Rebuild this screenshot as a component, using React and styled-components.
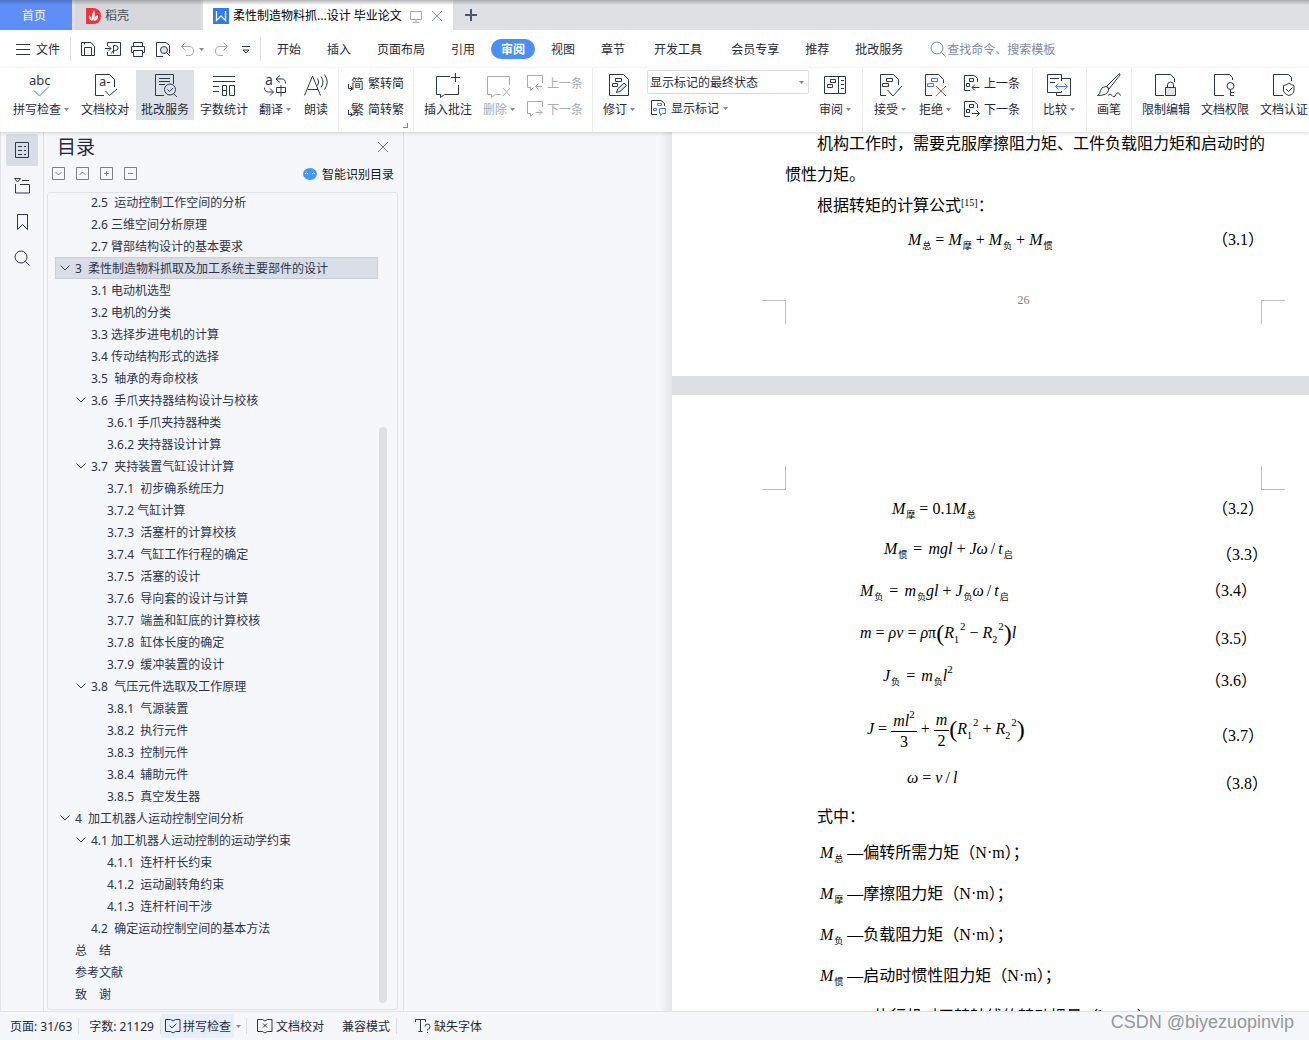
import React from 'react'
import styled, { createGlobalStyle } from 'styled-components'

const outline = [
  { level: 2, text: '2.5  运动控制工作空间的分析' },
  { level: 2, text: '2.6 三维空间分析原理' },
  { level: 2, text: '2.7 臂部结构设计的基本要求' },
  { level: 1, text: '3  柔性制造物料抓取及加工系统主要部件的设计', open: true, active: true },
  { level: 2, text: '3.1 电动机选型' },
  { level: 2, text: '3.2 电机的分类' },
  { level: 2, text: '3.3 选择步进电机的计算' },
  { level: 2, text: '3.4 传动结构形式的选择' },
  { level: 2, text: '3.5  轴承的寿命校核' },
  { level: 2, text: '3.6  手爪夹持器结构设计与校核', open: true },
  { level: 3, text: '3.6.1 手爪夹持器种类' },
  { level: 3, text: '3.6.2 夹持器设计计算' },
  { level: 2, text: '3.7  夹持装置气缸设计计算', open: true },
  { level: 3, text: '3.7.1  初步确系统压力' },
  { level: 3, text: '3.7.2 气缸计算' },
  { level: 3, text: '3.7.3  活塞杆的计算校核' },
  { level: 3, text: '3.7.4  气缸工作行程的确定' },
  { level: 3, text: '3.7.5  活塞的设计' },
  { level: 3, text: '3.7.6  导向套的设计与计算' },
  { level: 3, text: '3.7.7  端盖和缸底的计算校核' },
  { level: 3, text: '3.7.8  缸体长度的确定' },
  { level: 3, text: '3.7.9  缓冲装置的设计' },
  { level: 2, text: '3.8  气压元件选取及工作原理', open: true },
  { level: 3, text: '3.8.1  气源装置' },
  { level: 3, text: '3.8.2  执行元件' },
  { level: 3, text: '3.8.3  控制元件' },
  { level: 3, text: '3.8.4  辅助元件' },
  { level: 3, text: '3.8.5  真空发生器' },
  { level: 1, text: '4  加工机器人运动控制空间分析', open: true },
  { level: 2, text: '4.1 加工机器人运动控制的运动学约束', open: true },
  { level: 3, text: '4.1.1  连杆杆长约束' },
  { level: 3, text: '4.1.2  运动副转角约束' },
  { level: 3, text: '4.1.3  连杆杆间干涉' },
  { level: 2, text: '4.2  确定运动控制空间的基本方法' },
  { level: 1, text: '总　结' },
  { level: 1, text: '参考文献' },
  { level: 1, text: '致　谢' },
]

const menu = [
  { text: '开始' },
  { text: '插入' },
  { text: '页面布局' },
  { text: '引用' },
  { text: '审阅', active: true },
  { text: '视图' },
  { text: '章节' },
  { text: '开发工具', wide: true },
  { text: '会员专享' },
  { text: '推荐' },
  { text: '批改服务' },
]

const blue = '#3f83f0'
const arrowDown = <path d="M0 0h5L2.5 3z" fill="#7d869b" stroke="none" />

const marks = <path d="M8.500 5.500h6v3h-6zM4.500 10.500h6v3h-6z" />

// 24px ribbon drawings
const big = {
  spell: (
    <>
      <text x="0" y="12" fontSize="13" fill="#2d3850" stroke="none">abc</text>
      <path d="M5 17.500l5.500 5.500 9-9" stroke={blue} />
    </>
  ),
  proof: (
    <>
      <path d="M11 22.500H2.500V1.500h14L21.500 6.500V14M12.500 18l4 4.500 7.500-6.500" />
      <text x="6" y="13" fontSize="13" fill="#2d3850" stroke="none">a-</text>
    </>
  ),
  service: (
    <>
      <path d="M11 22.500H2.500V1.500h18V11M6 5.500h11M6 8.500h11M6 11.500h6" />
      <circle cx="17" cy="16.500" r="5.500" />
      <path d="M14.500 16.500l2 2 3.500-3.500M20.500 20.500l3.500 3.500" />
    </>
  ),
  count: (
    <path d="M1 3.500h22M1 8.500h22M1 13.500h6M1 18.500h6M10.500 12.500h4v10h-4zM10.500 17.500h4M17.500 12.500h5v10h-5z" />
  ),
  translate: (
    <>
      <text x="2" y="12" fontSize="14" fill="#2d3850" stroke="none">a</text>
      <path d="M17 2.500l-4 3.500 4 3.500M13 6h6q3.500 0 3.500 4.500M1.500 14.500q0 4.500 4 4.500H10M7 15.500l3.500 3.500L7 22.500M13.500 14.500h9v5h-9zM18 12v11.500" />
    </>
  ),
  read: (
    <path d="M.5 22.500L8.500 3l8 19.500M3.500 16.500h10.500M13.500 5.500q2.500 3.500 0 7M17 3.500q4 5.500 0 11M20.500 1.500q5.500 7.500 0 15" />
  ),
  addNote: (
    <path d="M14 3.500H.5v18H4.500v3l4-3h14V12M19.500 0v9M15 4.500h9" />
  ),
  delNote: (
    <path d="M22.500 12V3.500H.5v18H4.500v3l4-3h5M16 15l7 8M23 15l-7 8" />
  ),
  revise: (
    <>
      <path d="M2.500 1.500h14l5 5v16h-19z" />
      <path d="M8.500 5.500h6v3h-6zM5.500 10.500h5v3h-5z" />
      <path d="M9.500 19.500l1-3.500 6.500-6 2.500 2.500-6.500 6z" fill="#dfe1e6" />
    </>
  ),
  review: (
    <path d="M1.500 3.500h21v17h-21zM15.500 3.500v17M7.500 6.500h5v3h-5zM4.500 11.500h5v3h-5zM18 7.500h3M18 11.500h3M18 15.500h3" />
  ),
  accept: (
    <>
      <path d="M8 22.500H2.500V1.500h13l5 5V12M9.500 17l5.500 6 9-10" />
      {marks}
    </>
  ),
  reject: (
    <>
      <path d="M9 22.500H2.500V1.500h13l5 5V10" />
      <g stroke={blue}>{marks}</g>
      <path d="M13 13l10 10M23 13L13 23" stroke="#e2524c" />
    </>
  ),
  compare: (
    <>
      <path d="M14.500 8V1.500H.5v18h9M3 5.500h9M3 9.500h5M14.500 5.500h9v17h-14v-3M14.500 18v1.500h-5" />
      <path d="M8.500 13.500h12M11.500 10.500l-3 3 3 3M17.500 10.500l3 3-3 3" stroke={blue} />
    </>
  ),
  pen: (
    <>
      <path d="M22.500.5L9.500 13.500l2.500 2.500L23 2z" />
      <path d="M9 13.500q3 0 2.500 4-1 5-11 5 2.500-1 3-5 1-4 5.500-4zM11 22.500q2-3 4 0t4-1 4.500 1" />
    </>
  ),
  limit: (
    <>
      <path d="M10 22.500H1.500v-21h15l4 4V9" />
      <path d="M11.500 14.500h10v8h-10z" fill="#e2e4e8" />
      <path d="M13.500 14.500v-2.500q0-3 3-3t3 3v2.500" />
    </>
  ),
  access: (
    <>
      <path d="M11 22.500H1.500v-21h15l3 3V7" />
      <circle cx="17.500" cy="13" r="3.500" />
      <path d="M17.500 16.500v6h3.500M17.500 19.500h3.500" />
    </>
  ),
  certify: (
    <path d="M11 22.500H1.500v-21h15l3 3V8M11.500 12.500q3.500-.500 5.500-2.500 2 2 5 2.500v4.500q0 4-5 5.500-5.500-1.500-5.500-5.500zM14 16l2.500 2.500 4-4" />
  ),
}

// 16px drawings
const small = {
  menu: <path d="M1 3.500h14M1 8.500h14M1 13.500h14" />,
  save: <path d="M1.500 1.500h9.500l3.500 4v9h-13zM4.500 14.500v-8h7v8M4.500 1.500v2" />,
  pdf: (
    <path d="M2.500 5V1.500h13v13h-13V11M0 7.500h6M3.500 5l2.500 2.500L3.500 10M8.500 12.500V4.500h2q2.500 0 2.500 2.500t-2.500 2.500q-4 0-4 3" />
  ),
  print: <path d="M3.500 5.500v-4h9v4M3.500 11.500h-2v-6h13v6h-2M3.500 9.500h9v6h-9z" />,
  preview: (
    <>
      <path d="M8 15.500H1.500V1.500h9.500l3.500 3v8" />
      <circle cx="9" cy="9" r="3.500" fill="#dfe1e6" />
      <path d="M12 12l3 3" />
    </>
  ),
  undo: <path d="M5.500 1.500l-4 4 4 4M1.500 5.500H9q4.500 0 4.500 4.500T9 14.500H6" />,
  redo: <path d="M10.500 1.500l4 4-4 4M14.500 5.500H7Q2.500 5.500 2.500 10t4.500 4.500h3" />,
  more: <path d="M4 5.500h8M5 9l3 3 3-3z" />,
  search: (
    <>
      <circle cx="7" cy="7" r="6" />
      <path d="M11.500 11.500l4 4" />
    </>
  ),
  plus: <path d="M8 2v12M2 8h12" strokeWidth="2" />,
  close: <path d="M3 3l10 10M13 3L3 13" />,
  screen: <path d="M2.500 3.500h11v8h-11zM8 11.500v3M5 14.500h6" />,
  toSimple: (
    <>
      <text x="3" y="13" fontSize="13" fill="#2d3850" stroke="none">简</text>
      <path d="M.5 9v4.500H4M2.500 11.500l2 2-2 2" />
    </>
  ),
  toTrad: (
    <>
      <text x="3" y="13" fontSize="13" fill="#2d3850" stroke="none">繁</text>
      <path d="M.5 9v4.500H4M2.500 11.500l2 2-2 2" />
    </>
  ),
  prevNote: <path d="M15.500 8V.5H.5v12h3v3l3-3M15 11.500H9M11.500 8.500l-3 3 3 3" />,
  nextNote: <path d="M15.500 6V.5H.5v12h3v3l3-3M8.500 11.500H15M12 8.500l3 3-3 3" />,
  prevMark: <path d="M6 15.500H.5V.5h9.500l3.500 3V7M5.500 3.500h4v3h-4zM2.500 8.500h3v3h-3zM15.500 12.500H8M11 9.500l-3 3 3 3" />,
  nextMark: <path d="M6 15.500H.5V.5h9.500l3.500 3V7M5.500 3.500h4v3h-4zM2.500 8.500h3v3h-3zM8 12.500h7.500M12.500 9.500l3 3-3 3" />,
  showMark: (
    <>
      <path d="M6 14.500H.5V.5h9.500l3.500 3V6" />
      <path d="M6.500 3.500h4v2h-4zM2.500 8.500h3v2h-3zM8.500 8.500h6v5h-3l-2 2v-2h-1z" stroke={blue} />
    </>
  ),
  outline: <path d="M1.500.5h13v15h-13zM4 4.500h4M10 4.500h2M4 8.500h4M10 8.500h2M4 12.500h4M10 12.500h2" />,
  chapters: <path d="M.5.5h6L3.500 4zM8 2.500h7M1.500 6v9h14V6.500H6" />,
  bookmark: <path d="M3.500.5h10v15l-5-5-5 5z" />,
  boxDown: <path d="M2.500 1.500h12v12h-12zM5.500 6l3 3 3-3" />,
  boxUp: <path d="M2.500 1.500h12v12h-12zM5.500 9l3-3 3 3" />,
  boxPlus: <path d="M2.500 1.500h12v12h-12zM8.500 5v5M6 7.500h5" />,
  boxMinus: <path d="M2.500 1.500h12v12h-12zM6 7.500h5" />,
  robot: (
    <>
      <ellipse cx="7" cy="8" rx="7" ry="6" fill="#4597f3" stroke="none" />
      <path d="M2 8q1.500-2 3 0M9 8q1.500-2 3 0" stroke="#fff" />
    </>
  ),
  bookCheck: <path d="M5.500 1.500H.5v12h5l2.500 1.500 2.500-1.500h4.500v-12h-4.500L8 3zM4.500 7.500l2.500 2.500 4.500-4.500" />,
  bookCross: <path d="M5.500 1.500H.5v12h5l2.500 1.500 2.500-1.500h4.500v-12h-4.500L8 3zM6 5.500l4 4M10 5.500l-4 4" />,
  fontMissing: <path d="M.5 4V1.500h10V4M5.500 1.500v12M3.500 13.500h4M10 8.500q0-2.500 2.500-2.500T15 8.500t-2.500 3v1M12.500 14v1" />,
}

function Icon({ name, size = 16, color = '#2d3850' }) {
  const art = size === 24 ? big[name] : small[name]
  return (
    <Drawing width={size} height={size} viewBox={`0 0 ${size} ${size}`} fill="none" stroke={color} aria-hidden="true">
      {art}
    </Drawing>
  )
}

function Caret() {
  return (
    <Drawing width="5" height="3" viewBox="0 0 5 3" aria-hidden="true">{arrowDown}</Drawing>
  )
}

function Tool({ icon, label, width = 58, caret, active, disabled }) {
  return (
    <ToolButton $width={width} $active={active} disabled={disabled}>
      <Icon name={icon} size={24} color={disabled ? '#a9abb0' : undefined} />
      <ToolLabel>{label}{caret && <Caret />}</ToolLabel>
    </ToolButton>
  )
}

function SmallTool({ icon, label, caret, disabled }) {
  return (
    <SmallButton disabled={disabled}>
      <Icon name={icon} color={disabled ? '#a9abb0' : undefined} />
      {label}
      {caret && <Caret />}
    </SmallButton>
  )
}

function Titlebar() {
  return (
    <TabStrip>
      <HomeTab>首页</HomeTab>
      <StoreTab>
        <Drawing width="15" height="16" viewBox="0 0 15 16">
          <path d="M0 0h8q7 1 7 8t-7 8H0z" fill="#f5313b" />
          <path d="M7 13Q4 9 8 2q2 6-1 11zM6 13Q2 11 3 7q3 2 3 6zM8 13q0-5 4-6 1 5-4 6z" fill="#fff" />
        </Drawing>
        稻壳
      </StoreTab>
      <DocTab>
        <Drawing width="16" height="16" viewBox="0 0 16 16">
          <path d="M0 0h16v16H0z" fill="#2f7cf0" />
          <path d="M3.500 3v9.500L8 8l4.500 4.500V3" fill="none" stroke="#fff" strokeWidth="1.300" />
        </Drawing>
        <DocName>柔性制造物料抓...设计 毕业论文</DocName>
        <Icon name="screen" size={16} color="#a3acc0" />
        <TabAction aria-label="关闭"><Icon name="close" color="#8f9ab3" /></TabAction>
      </DocTab>
      <TabAction aria-label="新建"><Icon name="plus" color="#4b5670" /></TabAction>
    </TabStrip>
  )
}

function MenuBar() {
  return (
    <MenuRow>
      <FileButton><Icon name="menu" />文件</FileButton>
      <QuickTools>
        <QuickButton aria-label="保存"><Icon name="save" /></QuickButton>
        <QuickButton aria-label="输出为PDF"><Icon name="pdf" /></QuickButton>
        <QuickButton aria-label="打印"><Icon name="print" /></QuickButton>
        <QuickButton aria-label="打印预览"><Icon name="preview" /></QuickButton>
        <QuickButton aria-label="撤销"><Icon name="undo" color="#a9abb0" /><Caret /></QuickButton>
        <QuickButton aria-label="恢复"><Icon name="redo" color="#a9abb0" /></QuickButton>
        <QuickButton aria-label="更多"><Icon name="more" /></QuickButton>
      </QuickTools>
      <Menu>
        {menu.map((m) => (
          <MenuItem key={m.text} $active={m.active} $wide={m.wide}>
            <span>{m.text}</span>
          </MenuItem>
        ))}
      </Menu>
      <Search>
        <Icon name="search" color="#7d8aa5" />
        <input placeholder="查找命令、搜索模板" aria-label="查找命令、搜索模板" />
      </Search>
    </MenuRow>
  )
}

function Ribbon() {
  return (
    <RibbonRow>
      <Group $first $end={3}>
        <Tool icon="spell" label="拼写检查" width={66} caret />
        <Tool icon="proof" label="文档校对" width={60} />
        <Tool icon="service" label="批改服务" active />
        <Tool icon="count" label="字数统计" />
        <Tool icon="translate" label="翻译" width={42} caret />
        <Tool icon="read" label="朗读" width={38} />
      </Group>
      <Group>
        <Stack>
          <SmallTool icon="toSimple" label="繁转简" />
          <SmallTool icon="toTrad" label="简转繁" />
        </Stack>
        <Launcher aria-label="中文简繁转换" />
      </Group>
      <Group>
        <Tool icon="addNote" label="插入批注" />
        <Tool icon="delNote" label="删除" width={42} caret disabled />
        <Stack>
          <SmallTool icon="prevNote" label="上一条" disabled />
          <SmallTool icon="nextNote" label="下一条" disabled />
        </Stack>
      </Group>
      <Group $end={6}>
        <Tool icon="revise" label="修订" width={42} caret />
        <MarkStack>
          <Select>
            <select aria-label="标记状态" defaultValue="final">
              <option value="final">显示标记的最终状态</option>
            </select>
            <Caret />
          </Select>
          <SmallTool icon="showMark" label="显示标记" caret />
        </MarkStack>
        <Tool icon="review" label="审阅" width={42} caret />
      </Group>
      <Group $end={8}>
        <Tool icon="accept" label="接受" width={44} caret />
        <Tool icon="reject" label="拒绝" width={44} caret />
        <Stack>
          <SmallTool icon="prevMark" label="上一条" />
          <SmallTool icon="nextMark" label="下一条" />
        </Stack>
      </Group>
      <Group $end={6}>
        <Tool icon="compare" label="比较" width={42} caret />
      </Group>
      <Group>
        <Tool icon="pen" label="画笔" width={34} />
      </Group>
      <Group $last>
        <Tool icon="limit" label="限制编辑" />
        <Tool icon="access" label="文档权限" />
        <Tool icon="certify" label="文档认证" />
      </Group>
    </RibbonRow>
  )
}

function Outline() {
  return (
    <Panel>
      <PanelHead>
        <h2>目录</h2>
        <TabAction aria-label="关闭目录"><Icon name="close" color="#7c8089" /></TabAction>
      </PanelHead>
      <PanelTools>
        <QuickButton aria-label="展开"><Icon name="boxDown" color="#7c8089" /></QuickButton>
        <QuickButton aria-label="收起"><Icon name="boxUp" color="#7c8089" /></QuickButton>
        <QuickButton aria-label="全部展开"><Icon name="boxPlus" color="#7c8089" /></QuickButton>
        <QuickButton aria-label="全部收起"><Icon name="boxMinus" color="#7c8089" /></QuickButton>
        <Smart><Icon name="robot" />智能识别目录</Smart>
      </PanelTools>
      <Tree>
        <TreeList>
          {outline.map((o) => (
            <TreeRow key={o.text} $level={o.level} $active={o.active}>
              <Twist>
                {o.open && (
                  <Drawing width="10" height="6" viewBox="0 0 10 6" fill="none" stroke="#3a445c">
                    <path d="M.5.5L5 5 9.500.5" />
                  </Drawing>
                )}
              </Twist>
              {o.text}
            </TreeRow>
          ))}
        </TreeList>
        <Track><Thumb /></Track>
      </Tree>
    </Panel>
  )
}

const M = ({ sub }) => <><i>M</i><Sub>{sub}</Sub></>
const R = ({ n }) => <><i>R</i><Low>{n}</Low><High $after>2</High></>

function Equation({ no, indent, at, height, low, children }) {
  return (
    <EqRow $indent={indent} $at={at} $height={height}>
      <Formula>{children}</Formula>
      <EqNumber $low={low}>（{no}）</EqNumber>
    </EqRow>
  )
}

function Document() {
  return (
    <Canvas>
      <Sheet>
        <FirstLines>
          <Line $indent>机构工作时，需要克服摩擦阻力矩、工件负载阻力矩和启动时的</Line>
          <Line>惯性力矩。</Line>
          <Line $indent>根据转矩的计算公式<Cite>[15]</Cite>：</Line>
        </FirstLines>
        <Equation no="3.1" indent={123} at={427} height={38}>
          <M sub="总" /><Op>=</Op><M sub="摩" /><Op>+</Op><M sub="负" /><Op>+</Op><M sub="惯" />
        </Equation>
        <Foot>
          <Corner $top $left />
          <PageNo>26</PageNo>
          <Corner $top />
        </Foot>
      </Sheet>
      <Sheet>
        <Head>
          <Corner $left />
          <Corner />
        </Head>
        <Equation no="3.2" indent={107} at={427} height={38}>
          <M sub="摩" /><Op>=</Op>0.1<M sub="总" />
        </Equation>
        <Equation no="3.3" indent={99} at={431} height={42} low>
          <M sub="惯" /><Op $wide>=</Op><i>mgl</i><Op>+</Op><i>Jω</i><Slash>/</Slash><i>t</i><Sub>启</Sub>
        </Equation>
        <Equation no="3.4" indent={75} at={420} height={42}>
          <M sub="负" /><Op $wide>=</Op><i>m</i><Sub>负</Sub><i>gl</i><Op>+</Op><i>J</i><Sub>负</Sub><i>ω</i><Slash>/</Slash><i>t</i><Sub>启</Sub>
        </Equation>
        <Equation no="3.5" indent={75} at={420} height={42} low>
          <i>m</i><Op>=</Op><i>ρv</i><Op>=</Op><i>ρ</i>π<Paren>(</Paren><R n="1" /><Op>−</Op><R n="2" /><Paren>)</Paren><i>l</i>
        </Equation>
        <Equation no="3.6" indent={98} at={420} height={42} low>
          <i>J</i><Sub>负</Sub><Op $wide>=</Op><i>m</i><Sub>负</Sub><i>l</i><High>2</High>
        </Equation>
        <Equation no="3.7" indent={82} at={427} height={68} low>
          <i>J</i><Op>=</Op>
          <Fraction><span><i>ml</i><High>2</High></span><span>3</span></Fraction>
          <Op>+</Op>
          <Fraction><span><i>m</i></span><span>2</span></Fraction>
          <Paren>(</Paren><R n="1" /><Op>+</Op><R n="2" /><Paren>)</Paren>
        </Equation>
        <Equation no="3.8" indent={122} at={431} height={28} low>
          <i>ω</i><Op>=</Op><i>v</i><Slash>/</Slash><i>l</i>
        </Equation>
        <Where>
          <Line $indent>式中：</Line>
          <Term><M sub="总" /> —偏转所需力矩（N·m）；</Term>
          <Term><M sub="摩" /> —摩擦阻力矩（N·m）；</Term>
          <Term><M sub="负" /> —负载阻力矩（N·m）；</Term>
          <Term><M sub="惯" /> —启动时惯性阻力矩（N·m）；</Term>
          <Term $deep><i>J</i><Sub>负</Sub> —执行机对于转轴线的转动惯量（kg·m²）；</Term>
        </Where>
      </Sheet>
    </Canvas>
  )
}

function Status() {
  return (
    <StatusBar>
      <StatusItem $edge>页面: 31/63</StatusItem>
      <StatusItem $edge>字数: 21129</StatusItem>
      <SpellCheck>
        <Icon name="bookCheck" />拼写检查
      </SpellCheck>
      <StatusCaret><Caret /></StatusCaret>
      <StatusItem><Icon name="bookCross" />文档校对</StatusItem>
      <StatusItem $edge $lead={12}>兼容模式</StatusItem>
      <StatusItem $lead={18}><Icon name="fontMissing" />缺失字体</StatusItem>
      <Watermark>CSDN @biyezuopinvip</Watermark>
    </StatusBar>
  )
}

function App() {
  return (
    <>
      <GlobalStyle />
      <Shell>
        <Titlebar />
        <MenuBar />
        <Ribbon />
        <Main>
          <Rail>
            <RailButton $active aria-label="目录"><Icon name="outline" /></RailButton>
            <RailButton aria-label="章节"><Icon name="chapters" /></RailButton>
            <RailButton aria-label="书签"><Icon name="bookmark" /></RailButton>
            <RailButton aria-label="查找"><Icon name="search" /></RailButton>
          </Rail>
          <Outline />
          <Document />
        </Main>
        <Status />
      </Shell>
    </>
  )
}

export default App

const GlobalStyle = createGlobalStyle`
  * {
    box-sizing: border-box;
  }

  body {
    margin: 0;
    overflow: hidden;
    color: #1f2a40;
    font: 12px/17px 'Noto Sans', 'Noto Sans CJK SC', sans-serif;
  }

  button, input, select {
    margin: 0;
    padding: 0;
    border: 0;
    background: none;
    color: inherit;
    font: inherit;
  }
`

const Shell = styled.div`
  display: flex;
  flex-direction: column;
  height: 100vh;
  background: #f5f7fa;
`

const Drawing = styled.svg`
  flex: none;
  display: block;
  overflow: visible;
`

const TabStrip = styled.div`
  display: flex;
  flex: none;
  height: 30px;
  background: linear-gradient(#a9aaad, #dfe0e4 5px);
`

const HomeTab = styled.button`
  width: 72px;
  padding: 1px 4px 0 0;
  background: linear-gradient(#4b74c8, #5e8ff8 5px);
  color: #fff;
`

const StoreTab = styled.button`
  display: flex;
  align-items: center;
  gap: 4px;
  width: 126px;
  margin: 0 2px 0 3px;
  padding: 1px 0 0 11px;
  background: linear-gradient(#a3a4a7, #d6d8db 5px);
  color: #454c5a;
`

const DocTab = styled.div`
  display: flex;
  align-items: center;
  width: 250px;
  padding: 1px 8px 0 10px;
  background: linear-gradient(#b4b4b6, #fff 5px);
  color: #000;
`

const DocName = styled.span`
  flex: 1;
  margin-left: 4px;
  white-space: nowrap;
`

const TabAction = styled.button`
  display: flex;
  align-items: center;
  justify-content: center;
  margin-left: 5px;

  ${TabStrip} > & {
    margin-left: 10px;
  }
`

const MenuRow = styled.div`
  display: flex;
  flex: none;
  align-items: center;
  height: 38px;
  background: #fff;
`

const FileButton = styled.button`
  display: flex;
  align-items: center;
  gap: 5px;
  width: 71px;
  height: 24px;
  padding-left: 15px;
  border-right: 1px solid #dfe1e6;
`

const QuickTools = styled.div`
  display: flex;
  align-items: center;
  gap: 9px;
  width: 190px;
  height: 24px;
  padding-left: 9px;
  border-right: 1px solid #dfe1e6;
`

const QuickButton = styled.button`
  display: flex;
  align-items: center;
  gap: 3px;
`

const Menu = styled.nav`
  display: flex;
  padding-left: 3px;
`

const MenuItem = styled.button`
  padding: 0 ${(p) => (p.$wide ? 6 : 3)}px;
  white-space: nowrap;

  > span {
    display: block;
    padding: 2px 10px 1px;
    border-radius: 10px;
    background: ${(p) => (p.$active ? '#4a90f2' : 'none')};
    color: ${(p) => (p.$active ? '#fff' : 'inherit')};
    font-weight: ${(p) => (p.$active ? 700 : 400)};
  }
`

const Search = styled.label`
  display: flex;
  align-items: center;
  gap: 1px;
  margin-left: 14px;

  > input {
    width: 120px;
    outline: none;
  }

  > input::placeholder {
    color: #7d8aa5;
    opacity: 1;
  }
`

const RibbonRow = styled.div`
  position: relative;
  display: flex;
  flex: none;
  height: 64px;
  background: #fff;
  box-shadow: 0 1px 4px rgba(0, 0, 0, 0.16);
  z-index: 1;
`

const Group = styled.div`
  position: relative;
  display: flex;
  flex: none;
  align-items: flex-start;
  gap: 1px;
  padding: 2px ${(p) => p.$end || 5}px 0 ${(p) => (p.$first ? 8 : 5)}px;
  border-right: ${(p) => (p.$last ? 0 : 1)}px solid #eceef1;
`

const ToolButton = styled.button`
  display: flex;
  flex: none;
  flex-direction: column;
  align-items: center;
  gap: 4px;
  width: ${(p) => p.$width}px;
  height: 50px;
  padding-top: 3px;
  background: ${(p) => (p.$active ? '#dce1e6' : 'none')};
  color: ${(p) => (p.disabled ? '#a9abb0' : 'inherit')};
`

const ToolLabel = styled.span`
  display: flex;
  align-items: center;
  gap: 3px;
  white-space: nowrap;
`

const SmallButton = styled.button`
  display: flex;
  align-items: center;
  gap: 4px;
  height: 26px;
  color: ${(p) => (p.disabled ? '#a9abb0' : 'inherit')};
  white-space: nowrap;
`

const Stack = styled.div`
  display: flex;
  flex-direction: column;
  padding: 0 4px;

  ${ToolButton} + & {
    padding: 0 4px 0 6px;
  }
`

const MarkStack = styled.div`
  display: flex;
  flex-direction: column;
  gap: 1px;
  width: 162px;
  margin: 0 4px 0 6px;

  > ${SmallButton} {
    padding-left: 4px;
  }
`

const Select = styled.div`
  display: flex;
  align-items: center;
  height: 24px;
  padding: 0 4px 0 2px;
  border: 1px solid #dcdee3;
  border-radius: 2px;

  > select {
    flex: 1;
    appearance: none;
    outline: none;
  }
`

const Launcher = styled.button`
  position: absolute;
  right: 5px;
  bottom: 4px;
  width: 5px;
  height: 5px;
  border: solid #7d869b;
  border-width: 0 1px 1px 0;
`

const Main = styled.div`
  display: flex;
  flex: 1;
  min-height: 0;
`

const Rail = styled.div`
  display: flex;
  flex: none;
  flex-direction: column;
  align-items: center;
  gap: 4px;
  width: 44px;
  padding-top: 2px;
  border: solid #e0e3e9;
  border-width: 0 1px;
`

const RailButton = styled.button`
  display: flex;
  align-items: center;
  justify-content: center;
  width: 32px;
  height: 32px;
  border-radius: 2px;
  background: ${(p) => (p.$active ? '#d9dee6' : 'none')};
`

const Panel = styled.aside`
  display: flex;
  flex: none;
  flex-direction: column;
  width: 360px;
  padding: 0 5px 1px 3px;
  border-right: 1px solid #e0e3e9;
`

const PanelHead = styled.div`
  display: flex;
  align-items: center;
  justify-content: space-between;
  height: 30px;
  padding: 0 7px 0 10px;

  > h2 {
    margin: 0;
    font-size: 19px;
    font-weight: 400;
    line-height: 30px;
  }
`

const PanelTools = styled.div`
  display: flex;
  align-items: center;
  gap: 8px;
  height: 24px;
  margin-bottom: 6px;
  padding: 0 4px 0 3px;
`

const Smart = styled.button`
  display: flex;
  align-items: center;
  gap: 3px;
  margin-left: auto;
  color: #101828;
`

const Tree = styled.div`
  display: flex;
  flex: 1;
  min-height: 0;
  padding-left: 7px;
  overflow: hidden;
  border: 1px solid #e0e3e9;
  border-radius: 3px;
`

const TreeList = styled.ul`
  flex: 1;
  margin: -2px 0 0;
  padding: 0;
  list-style: none;
`

const TreeRow = styled.li`
  display: flex;
  align-items: center;
  height: 22px;
  padding-left: ${(p) => p.$level * 16 - 12}px;
  border: 1px solid ${(p) => (p.$active ? '#c8cfd9' : 'transparent')};
  background: ${(p) => (p.$active ? '#d9dde6' : 'none')};
  color: #2b3550;
  white-space: pre;
`

const Twist = styled.span`
  width: 15px;
`

const Track = styled.div`
  display: flex;
  width: 8px;
  margin: 0 10px 0 1px;
  padding: 234px 0 6px;
`

const Thumb = styled.div`
  flex: 1;
  border-radius: 4px;
  background: #dde1e4;
`

const Canvas = styled.main`
  display: flex;
  flex: 1;
  flex-direction: column;
  gap: 19px;
  min-width: 0;
  padding-left: 268px;
  overflow: hidden;
  background: linear-gradient(90deg, #f5f7fa 256px, #e2e4e7 268px, #dedfe2 268px);
  color: #000;
  font: 16px/31px 'Liberation Serif', 'Noto Sans CJK SC', serif;
`

const Sheet = styled.section`
  flex: none;
  width: 702px;
  padding: 0 113px 52px;
  background: #fff;
`

const FirstLines = styled.div`
  margin-top: -4px;
`

const Line = styled.p`
  margin: 0;
  padding-left: ${(p) => (p.$indent ? 32 : 0)}px;
  white-space: nowrap;
`

const Cite = styled.sup`
  font-size: 10px;
  line-height: 1;
  vertical-align: 5px;
`

const EqRow = styled.div`
  display: grid;
  grid-template-columns: ${(p) => p.$indent}px ${(p) => p.$at - p.$indent}px auto;
  align-items: center;
  height: ${(p) => p.$height}px;
  white-space: nowrap;
`

const Formula = styled.div`
  grid-column: 2;
  line-height: 20px;
`

const EqNumber = styled.div`
  padding-top: ${(p) => (p.$low ? 12 : 0)}px;
  line-height: 16px;
`

const Sub = styled.sub`
  margin-left: 1px;
  font-size: 9px;
  line-height: 1;
  vertical-align: -4px;
`

const Low = styled.sub`
  font-size: 10px;
  line-height: 1;
  vertical-align: -5px;
`

const High = styled.sup`
  margin-left: ${(p) => (p.$after ? 1 : 0)}px;
  font-size: 11px;
  line-height: 1;
  vertical-align: 8px;
`

const Op = styled.span`
  margin: 0 ${(p) => (p.$wide ? 6 : 4)}px;
`

const Slash = styled.span`
  margin: 0 3px;
`

const Paren = styled.span`
  font-size: 24px;
  line-height: 1;
  vertical-align: -3px;
`

const Fraction = styled.span`
  display: inline-flex;
  flex-direction: column;
  text-align: center;
  vertical-align: middle;

  > span {
    padding: 0 2px;
  }

  > span + span {
    border-top: 1px solid #000;
  }
`

const Foot = styled.div`
  display: flex;
  justify-content: space-between;
  height: 32px;
  margin: 33px -24px 0 -23px;
`

const Head = styled.div`
  display: flex;
  justify-content: space-between;
  margin: 0 -24px 0 -23px;
  padding-top: 71px;
`

const Corner = styled.span`
  align-self: flex-end;
  width: 24px;
  height: 24px;
  border: 0 solid #c0c0c0;
  border-top-width: ${(p) => (p.$top ? 1 : 0)}px;
  border-bottom-width: ${(p) => (p.$top ? 0 : 1)}px;
  border-left-width: ${(p) => (p.$left ? 0 : 1)}px;
  border-right-width: ${(p) => (p.$left ? 1 : 0)}px;
`

const PageNo = styled.span`
  color: #808080;
  font-size: 12px;
  line-height: 16px;
`

const Where = styled.div`
  padding-top: 9px;
`

const Term = styled.p`
  margin: 0;
  padding-left: ${(p) => (p.$deep ? 52 : 35)}px;
  line-height: 41px;
  white-space: nowrap;
`

const StatusBar = styled.footer`
  position: relative;
  display: flex;
  flex: none;
  align-items: center;
  height: 29px;
  border-top: 1px solid #e0e3e9;
  background: #f5f7fa;
`

const StatusItem = styled.button`
  display: flex;
  align-items: center;
  gap: 3px;
  height: 16px;
  padding: 0 6px 0 ${(p) => p.$lead || 10}px;
  border-right: ${(p) => (p.$edge ? 1 : 0)}px solid #dcdfe5;
  white-space: nowrap;
`

const SpellCheck = styled.button`
  display: flex;
  align-items: center;
  gap: 2px;
  height: 24px;
  padding: 0 3px 0 4px;
  background: #e6effb;
`

const StatusCaret = styled.button`
  display: flex;
  align-items: center;
  height: 16px;
  padding: 0 5px 0 2px;
  border-right: 1px solid #dcdfe5;
`

const Watermark = styled.span`
  position: absolute;
  right: 15px;
  top: 0;
  color: #94979c;
  font: 18px/20px 'Liberation Sans', sans-serif;
`
